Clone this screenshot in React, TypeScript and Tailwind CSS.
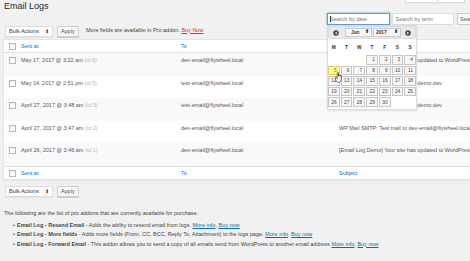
import React from "react";

const rows = [
  { date: "May 17, 2017 @ 3:22 am", id: 6, to: "dev-email@flywheel.local", subject: "[Email Log Demo] Your site has updated to WordPress 4.8" },
  { date: "May 14, 2017 @ 2:51 pm", id: 5, to: "test-email@flywheel.local", subject: "A test email sent from email-log-demo.dev" },
  { date: "April 27, 2017 @ 3:48 am", id: 3, to: "test-email@flywheel.local", subject: "A test email sent from email-log-demo.dev" },
  { date: "April 27, 2017 @ 3:47 am", id: 2, to: "dev-email@flywheel.local", subject: "WP Mail SMTP: Test mail to dev-email@flywheel.local" },
  { date: "April 26, 2017 @ 3:46 am", id: 1, to: "dev-email@flywheel.local", subject: "[Email Log Demo] Your site has updated to WordPress 4.7.4" },
];

const weeks: (number | null)[][] = [
  [null, null, null, 1, 2, 3, 4],
  [5, 6, 7, 8, 9, 10, 11],
  [12, 13, 14, 15, 16, 17, 18],
  [19, 20, 21, 22, 23, 24, 25],
  [26, 27, 28, 29, 30, null, null],
];

function Checkbox() {
  return <span className="block w-[7px] h-[7px] bg-white border border-[#b4b9be] shadow-[inset_0_1px_1px_rgba(0,0,0,0.08)]" />;
}

function BulkBar({ note }: { note?: boolean }) {
  return (
    <div className="flex h-[11px] pl-[5px]">
      <div className="flex items-center justify-between w-[48px] h-[11px] px-[3px] bg-white border border-[#ddd] shadow-[0_1px_1px_rgba(0,0,0,0.05)] text-[#32373c]">
        <span>Bulk Actions</span>
        <span className="text-[5px] leading-none">⬍</span>
      </div>
      <div className="flex items-center justify-center w-[22px] h-[11px] ml-[4px] bg-[#f7f7f7] border border-[#ccc] rounded-[1px] shadow-[0_1px_0_#ccc] text-[#555]">
        Apply
      </div>
      {note && (
        <div className="ml-[7px] pt-[0.5px] leading-[7px] text-[#444]">
          More fields are available in Pro addon. <a className="text-[#dc3232] underline">Buy Now</a>
        </div>
      )}
    </div>
  );
}

function HeadRow({ top }: { top?: boolean }) {
  return (
    <div className={`grid grid-cols-[17px_160px_158px_1fr] h-[13px] items-center bg-white text-[#0073aa] ${top ? "border-b" : "border-t"} border-[#e1e1e1]`}>
      <div className="pl-[5px]"><Checkbox /></div>
      <div>Sent at</div>
      <div>To</div>
      <div>Subject</div>
    </div>
  );
}

function NavIcon({ dir }: { dir: "l" | "r" }) {
  return (
    <svg width="6" height="6" viewBox="0 0 12 12">
      <circle cx="6" cy="6" r="5.5" fill="#444" />
      {dir === "l" ? <path d="M7.5 3.2 4 6l3.5 2.8z" fill="#fff" /> : <path d="M4.5 3.2 8 6 4.5 8.8z" fill="#fff" />}
    </svg>
  );
}

function DatePicker() {
  return (
    <div className="absolute left-[327px] top-[25px] w-[90px] h-[85px] bg-white border border-[#ddd] shadow-[0_1px_2px_rgba(0,0,0,0.1)] text-[#454545]">
      <div className="flex items-center h-[13px] px-[4px] bg-[#e9e9e9] border border-[#ddd] rounded-[1px]">
        <NavIcon dir="l" />
        <div className="flex items-center justify-between w-[27px] h-[9px] ml-[6px] px-[2px] bg-[#f8f8f8] border border-[#ccc] text-[#333] font-bold text-[4.8px]">
          <span className="pl-[3px]">Jun</span>
          <span className="leading-none">⬍</span>
        </div>
        <div className="flex items-center justify-between w-[28px] h-[9px] ml-[1px] px-[2px] bg-[#f8f8f8] border border-[#ccc] text-[#333] font-bold text-[4.8px]">
          <span>2017</span>
          <span className="leading-none">⬍</span>
        </div>
        <div className="ml-auto"><NavIcon dir="r" /></div>
      </div>
      <div className="grid grid-cols-7 gap-x-[1px] mt-[2px] h-[12px] items-center text-center font-bold text-[4.8px] text-[#333]">
        {["M", "T", "W", "T", "F", "S", "S"].map((d, i) => (
          <span key={i}>{d}</span>
        ))}
      </div>
      <div className="grid grid-cols-7 gap-[1px] mt-[2px] text-[4.8px]">
        {weeks.flat().map((d, i) =>
          d === null ? (
            <span key={i} className="h-[9.6px]" />
          ) : (
            <span
              key={i}
              className={`h-[9.6px] flex items-center justify-end pr-[2px] border ${
                d === 5 ? "bg-[#fffa90] border-[#dad55e] text-[#777620]" : "bg-[#f6f6f6] border-[#c5c5c5]"
              }`}
            >
              {d}
            </span>
          )
        )}
      </div>
      <svg className="absolute left-[7px] top-[46px]" width="7" height="11" viewBox="0 0 16 24">
        <path
          d="M5 2c0-1 .7-1.6 1.5-1.6S8 1 8 2v7h.4V7.3c0-.9.7-1.5 1.5-1.5s1.5.6 1.5 1.5V9.4h.3V8.2c0-.9.6-1.5 1.4-1.5s1.4.6 1.4 1.5V15c0 4.5-2.6 8-6.5 8-3 0-4.6-1.7-6-4.6L.3 13.3c-.4-.9 0-1.8.8-2.1s1.6 0 2 .8L5 14.5z"
          fill="#fff"
          stroke="#000"
          strokeWidth="1.3"
        />
      </svg>
    </div>
  );
}

export default function App() {
  return (
    <div className="relative w-[470px] h-[261px] overflow-hidden bg-[#f1f1f1] text-[#444] text-[5.5px] leading-[7px] font-['Liberation_Sans',Arial,sans-serif]">
      <div className="flex justify-between h-[13px]">
        <h1 className="pl-[4px] pt-[1px] text-[9px] leading-[11px] text-[#23282d]">Email Logs</h1>
        <div className="mr-[5px] w-[60px] h-[3px] overflow-hidden bg-white border-x border-b border-[#ddd] shadow-[0_1px_1px_rgba(0,0,0,0.04)]">
          <div className="-mt-[5px] text-center text-[#72777c]">Screen Options ▾</div>
        </div>
      </div>

      <div className="flex justify-end gap-[2px] h-[12px] -mr-[12px]">
        <div className="flex items-center w-[63px] h-[12px] pl-[2px] bg-white border border-[#5b9dd9] shadow-[0_0_2px_rgba(30,140,190,0.8)] text-[#72777c]">
          <span className="w-[0.5px] h-[6px] bg-[#222]" />
          <span>Search by date</span>
        </div>
        <div className="flex items-center w-[62px] h-[12px] pl-[3px] bg-white border border-[#ddd] text-[#72777c]">Search by term</div>
        <div className="flex items-center w-[25px] h-[12px] ml-[1.5px] pl-[2px] bg-[#f7f7f7] border border-[#ccc] text-[#555]">Search</div>
      </div>

      <div className="mt-[1px]">
        <BulkBar note />
      </div>

      <div className="mt-[2px] ml-[3px] w-[480px] bg-white border border-[#e5e5e5] shadow-[0_1px_1px_rgba(0,0,0,0.04)]">
        <HeadRow top />
        {rows.map((r, i) => (
          <div
            key={r.id}
            className={`grid grid-cols-[17px_160px_158px_1fr] ${i % 2 === 0 ? "h-[23px] bg-[#f9f9f9]" : "h-[22px] bg-white"} pt-[3px] leading-[8px] text-[#555]`}
          >
            <div className="pl-[5px] pt-[0.5px]"><Checkbox /></div>
            <div className="whitespace-nowrap">
              {r.date} <span className="text-[#b4b9be]">(id:{r.id})</span>
            </div>
            <div className="whitespace-nowrap">{r.to}</div>
            <div className="whitespace-nowrap">{r.subject}</div>
          </div>
        ))}
        <HeadRow />
      </div>

      <div className="mt-[6px]">
        <BulkBar />
      </div>

      <p className="mt-[12px] pl-[4px] leading-[8px] text-[#444]">
        The following are the list of pro addons that are currently available for purchase.
      </p>
      <ul className="mt-[4px] pl-[13px] leading-[9.3px] text-[#444]">
        <li className="flex whitespace-nowrap">
          <span className="w-[4px]">•</span>
          <span>
            <b>Email Log - Resend Email</b> - Adds the ability to resend email from logs.{" "}
            <a className="text-[#0073aa] underline">More info</a>, <a className="text-[#0073aa] underline">Buy now</a>
          </span>
        </li>
        <li className="flex whitespace-nowrap">
          <span className="w-[4px]">•</span>
          <span>
            <b>Email Log - More fields</b> - Adds more fields (From, CC, BCC, Reply To, Attachment) to the logs page.{" "}
            <a className="text-[#0073aa] underline">More info</a>, <a className="text-[#0073aa] underline">Buy now</a>
          </span>
        </li>
        <li className="flex whitespace-nowrap">
          <span className="w-[4px]">•</span>
          <span>
            <b>Email Log - Forward Email</b> - This addon allows you to send a copy of all emails send from WordPress to another email address{" "}
            <a className="text-[#0073aa] underline">More info</a>, <a className="text-[#0073aa] underline">Buy now</a>
          </span>
        </li>
      </ul>

      <DatePicker />
    </div>
  );
}
